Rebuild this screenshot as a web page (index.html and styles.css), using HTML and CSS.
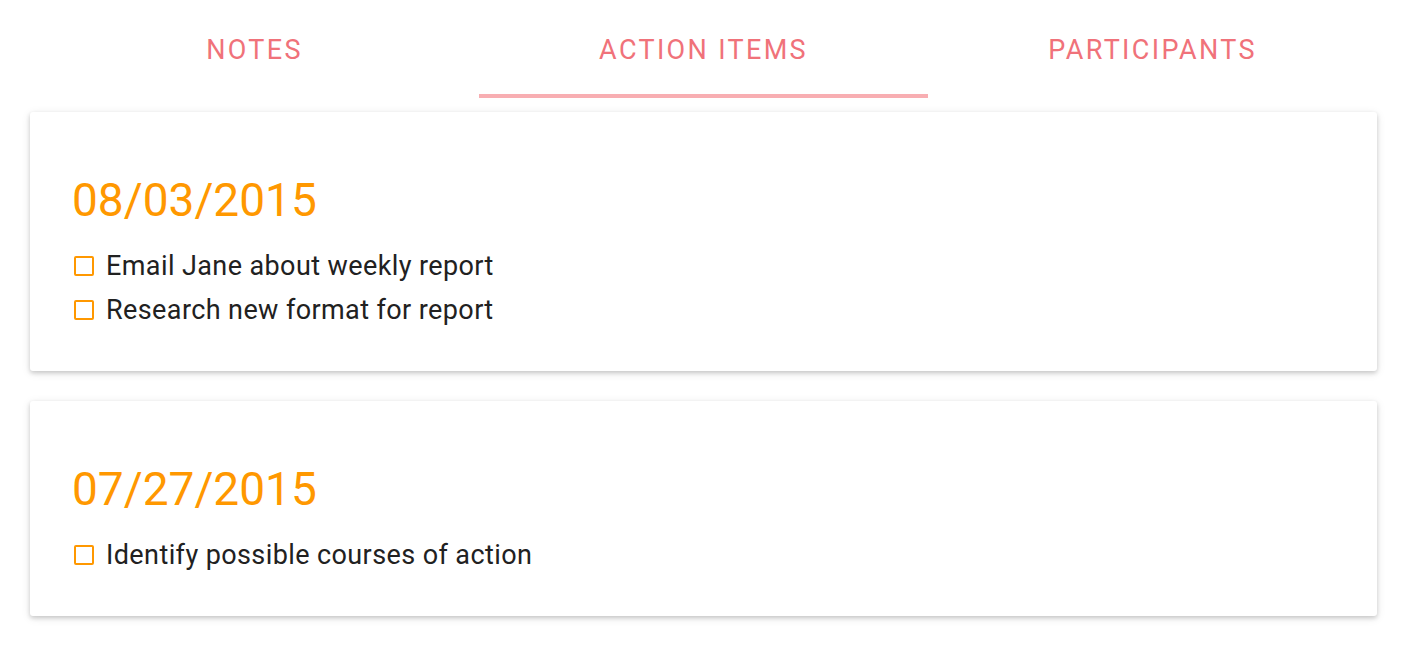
FILE: index.html
```html
<!DOCTYPE html>
<html>
<head>
<meta charset="utf-8">
<link rel="stylesheet" href="styles.css">
</head>
<body>
<div class="page">
  <nav class="tabs">
    <div class="tab">NOTES</div>
    <div class="tab active">ACTION ITEMS</div>
    <div class="tab">PARTICIPANTS</div>
  </nav>
  <section class="card">
    <h2 class="date">08/03/2015</h2>
    <ul class="items">
      <li class="item"><span class="box"></span>Email Jane about weekly report</li>
      <li class="item"><span class="box"></span>Research new format for report</li>
    </ul>
  </section>
  <section class="card">
    <h2 class="date">07/27/2015</h2>
    <ul class="items">
      <li class="item"><span class="box"></span>Identify possible courses of action</li>
    </ul>
  </section>
</div>
</body>
</html>
```

FILE: styles.css
```css
html, body {
  margin: 0;
  padding: 0;
  background: #ffffff;
  font-family: Roboto, "Liberation Sans", sans-serif;
}
.page {
  width: 1347px;
  margin-left: 30px;
  padding-bottom: 30px;
}
.tabs {
  display: grid;
  grid-template-columns: 1fr 1fr 1fr;
  height: 98px;
}
.tab {
  display: flex;
  align-items: center;
  justify-content: center;
  padding-top: 5px;
  color: #f0727a;
  font-size: 27px;
  letter-spacing: 2.35px;
  border-bottom: 4px solid transparent;
  box-sizing: border-box;
}
.tab.active {
  border-bottom-color: #f8aeb2;
}
.card {
  margin-top: 14px;
  background: #fff;
  border-radius: 3px;
  box-shadow: 0 2px 4px rgba(0,0,0,0.16), 0 2px 10px rgba(0,0,0,0.10);
  padding: 60px 42px 39px;
}
.card + .card {
  margin-top: 30px;
}
.date {
  margin: 0;
  font-weight: 400;
  font-size: 46px;
  line-height: 56px;
  color: #ff9800;
}
.items {
  list-style: none;
  margin: 16px 0 0;
  padding: 0;
}
.item {
  display: flex;
  align-items: center;
  font-size: 27px;
  letter-spacing: 0.4px;
  line-height: 44px;
  color: #212121;
}
.box {
  width: 16px;
  height: 16px;
  border: 2px solid #ff9800;
  border-radius: 2px;
  margin: 0 12px 0 2px;
  flex: none;
}
```
